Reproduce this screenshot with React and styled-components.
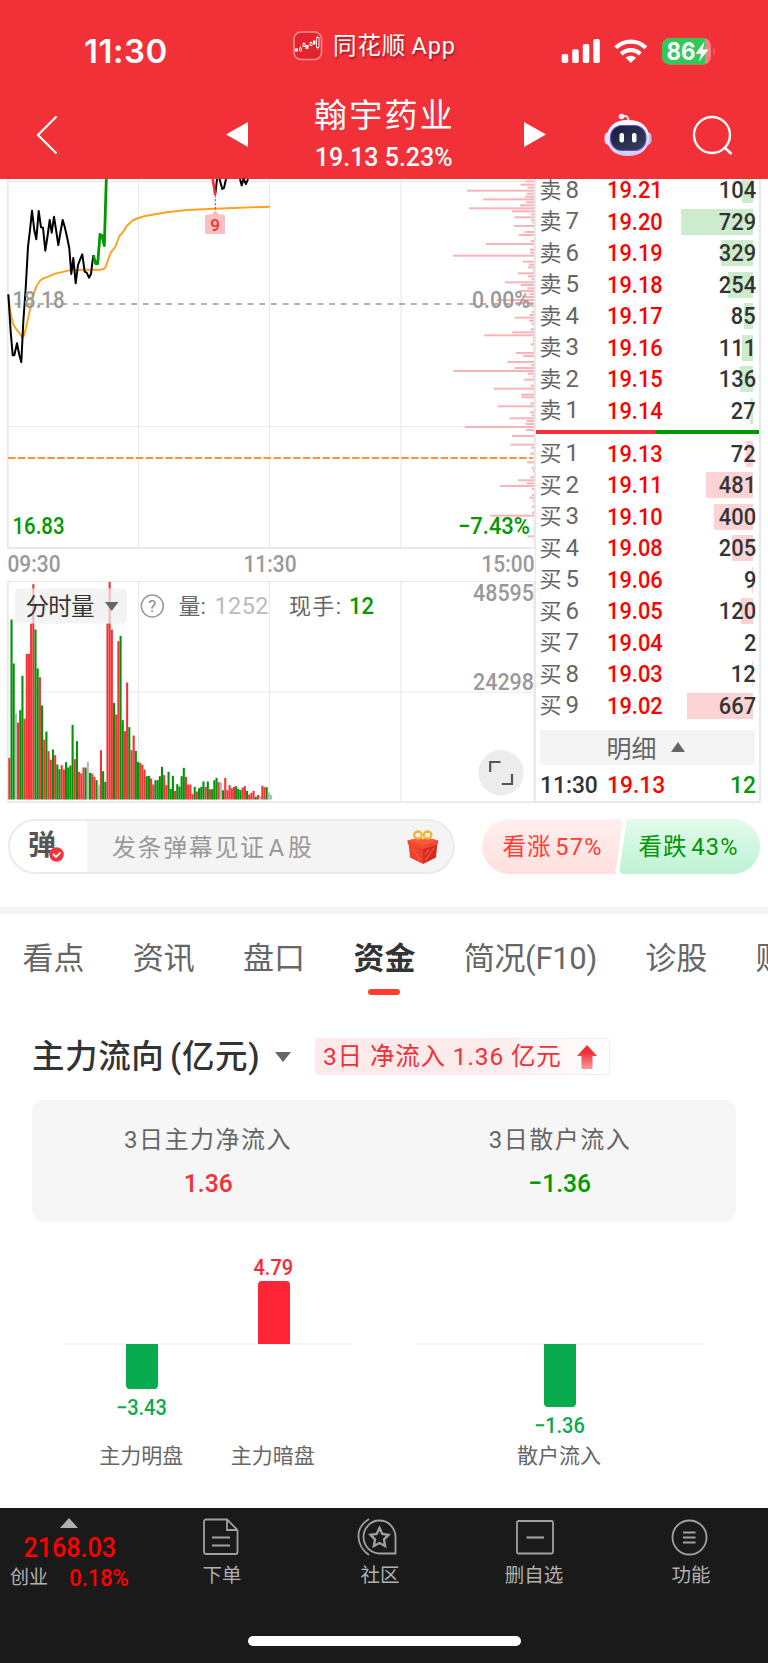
import React from 'react'
import styled, { createGlobalStyle, css } from 'styled-components'

const RED = '#f23038'
const UP = '#ff0000'
const DOWN = '#009900'
const GRID = '#e9e9e9'
const NUM = "Roboto, 'Noto Sans CJK SC', sans-serif"

const GlobalStyle = createGlobalStyle`
  * {
    box-sizing: border-box;
  }
  body {
    margin: 0;
    background: #fff;
    font-family: Roboto, 'Noto Sans CJK SC', sans-serif;
    color: #333;
  }
  svg {
    display: block;
  }
`

const sells = [
  [8, '19.21', 104, 11],
  [7, '19.20', 729, 72],
  [6, '19.19', 329, 32],
  [5, '19.18', 254, 25],
  [4, '19.17', 85, 9],
  [3, '19.16', 111, 11],
  [2, '19.15', 136, 13],
  [1, '19.14', 27, 3],
]

const buys = [
  [1, '19.13', 72, 7],
  [2, '19.11', 481, 47],
  [3, '19.10', 400, 39],
  [4, '19.08', 205, 21],
  [5, '19.06', 9, 1],
  [6, '19.05', 120, 12],
  [7, '19.04', 2, 0],
  [8, '19.03', 12, 1],
  [9, '19.02', 667, 66],
]

// [offset from the top, length], in thirds of a pixel
const profile = [
  [19, 25], [29, 41], [38, 20], [47, 201], [56, 22], [65, 27], [73, 153], [82, 24], [91, 42],
  [100, 195], [109, 66], [118, 9], [127, 59], [136, 9], [145, 4], [153, 60], [171, 28], [180, 46],
  [198, 10], [207, 144], [224, 13], [233, 11], [242, 243], [260, 33], [269, 15], [277, 18],
  [286, 3], [295, 49], [304, 18], [313, 8], [322, 88], [330, 40], [340, 20], [348, 44], [357, 12],
  [366, 30], [375, 112], [384, 57], [393, 27], [411, 6], [420, 14], [428, 57], [437, 15], [446, 7],
  [463, 10], [472, 65], [481, 149], [490, 4], [499, 3], [508, 10], [525, 2], [534, 54], [543, 33],
  [561, 80], [570, 8], [579, 57], [588, 242], [596, 19], [605, 4], [614, 31], [632, 10],
  [641, 121], [650, 2], [659, 39], [667, 37], [685, 11], [694, 108], [712, 12], [721, 6],
  [730, 74], [738, 22], [747, 25], [756, 207], [765, 24], [783, 66], [809, 71], [818, 8],
  [836, 11], [862, 21], [880, 7], [889, 3], [907, 11], [916, 48], [925, 22], [933, 102],
  [942, 6], [960, 7], [968, 14], [977, 4], [995, 7], [1013, 6], [1022, 131], [1084, 19],
]

// r = up minute, g = down minute, n = unchanged; number is height in thirds of a pixel
const volumes = `r125 g540 g408 n258 r231 g268 g371 r242 r437 r437 r528 r646 g510 g393 r367 g282 r180
g204 r145 r119 g150 r133 g105 g91 r103 r90 g112 g96 g102 g224 r121 g175 r83 r78 r96 g96 n113 g80
r78 r68 g58 n44 r148 g85 g53 r528 r653 r510 g290 r255 r475 g491 g238 r205 r351 g217 r148 r192
g146 g113 r110 r104 r90 g70 g71 r63 r45 g58 g58 g70 g98 r73 r43 g83 g32 g71 r26 g46 g39 g70 g95
r68 r45 r45 r16 g38 r24 g34 g38 g54 r38 g54 r31 g31 g58 g65 r52 n51 g28 r65 r28 r43 r34 r38 g40
g32 g28 r36 r40 g26 r15 r20 r26 g8 r14 n10 r41 r37 g37 n21 n14`
  .split(/\s+/)
  .map(v => ({ kind: v[0], h: Number(v.slice(1)) / 3 }))

const volumeColors = { r: '#f23438', g: '#009408', n: '#b8b8b8' }

const tabs = ['看点', '资讯', '盘口', '资金', '简况(F10)', '诊股', '财务']

const Page = styled.div`
  width: 768px;
  height: 1663px;
  overflow: hidden;
  display: flex;
  flex-direction: column;
  background: #fff;
`
// Digits are slightly condensed everywhere in the quote pages.
const Num = styled.span`
  display: inline-block;
  transform: scaleX(${p => p.$scale || 0.93});
  transform-origin: ${p => p.$origin || 'center'};
`

/* Header */

const Header = styled.header`
  height: 179px;
  flex: none;
  background: ${RED};
  color: #fff;
`
const StatusBar = styled.div`
  display: grid;
  grid-template-columns: 293px 268px 1fr;
  align-items: center;
  height: 90px;
`
const Clock = styled.div`
  padding: 12px 0 0 84px;
  font: 600 33px/40px Inter, sans-serif;
  letter-spacing: 0.5px;
`
const AppName = styled.div`
  display: flex;
  align-items: center;
  gap: 10px;
  padding-top: 1px;
  font-size: 23.5px;
  line-height: 30px;
  letter-spacing: 0.9px;
  word-spacing: -1.5px;
  text-shadow: 1px 2px 2px rgba(90, 0, 0, 0.5);
  white-space: nowrap;
`
const StatusIcons = styled.div`
  padding-top: 12px;
`
const NavBar = styled.div`
  display: grid;
  grid-template-columns: 36px 190px 297px 81px 88px 1fr;
  align-items: center;
  height: 89px;
`
const StockTitle = styled.div`
  display: flex;
  align-items: center;
  justify-content: space-between;
  grid-column: 3 / 5;
  width: 320px;
`
const StockNames = styled.div`
  margin: -2px 5px 0 0;
  text-align: center;
`
const StockName = styled.div`
  font-size: 33px;
  line-height: 42px;
  letter-spacing: 2.2px;
  padding-left: 2px;
`
const StockPrice = styled.div`
  font-size: 26px;
  font-weight: 500;
  line-height: 32px;
  margin-top: 4px;
`

/* Quote board */

const Board = styled.section`
  display: flex;
  flex: none;
  height: 624px;
  width: 761px;
`
const Charts = styled.div`
  width: 535px;
  svg {
    overflow: visible;
  }
`
const ChartText = styled.text`
  font-family: ${NUM};
  font-size: ${p => p.$size || 23.5}px;
  font-weight: ${p => p.$weight || 500};
`
const OrderBook = styled.div`
  width: 226px;
  border: solid ${GRID};
  border-width: 0 2px 2px 1px;
  overflow: hidden;
  display: flex;
  flex-direction: column;
`
const Orders = styled.div`
  flex: none;
  margin-top: ${p => p.$top}px;
`
const OrderRow = styled.div`
  display: grid;
  grid-template-columns: 67px 60px 1fr;
  align-items: center;
  height: 31.48px;
  padding: 0 3px 0 3.5px;
  font-size: 23.5px;
  font-weight: 500;
  line-height: 20px;
`
const OrderLabel = styled.span`
  display: flex;
  align-items: baseline;
  gap: 4px;
  font-size: 22px;
  font-weight: 400;
  color: #666;
`
const OrderIndex = styled.span`
  font-size: 24px;
`
const Price = styled.span`
  color: ${UP};
`
const Volume = styled.span`
  display: flex;
  justify-content: flex-end;
  align-items: center;
  height: 26px;
  color: ${p => p.$color || '#333'};
  ${p => p.$bar > 0 && css`
    background: linear-gradient(${p.$tone}, ${p.$tone}) right 3px top 0 / ${p.$bar}px 26px no-repeat;
  `}
`
const Ratio = styled.div`
  flex: none;
  height: 4px;
  margin-top: 4px;
  background: linear-gradient(to right, ${RED} 53.5%, ${DOWN} 53.5%);
`
const DetailToggle = styled.div`
  flex: none;
  display: flex;
  align-items: center;
  justify-content: center;
  gap: 14px;
  height: 35px;
  margin: 9px 4px 0 4px;
  padding: 0 4px 2px 0;
  background: #f4f4f4;
  color: #666;
  font-size: 25px;
`
const LastTrade = styled(OrderRow)`
  height: 43px;
  padding-top: 4px;
  font-size: 24.5px;
`

/* Comment bar */

const CommentBar = styled.section`
  flex: none;
  display: flex;
  justify-content: space-between;
  height: 104px;
  padding: 16px 8px 33px;
`
const CommentBox = styled.div`
  display: flex;
  width: 447px;
  height: 55px;
  border: 2px solid #ebebeb;
  border-radius: 28px;
  background: #f4f4f4;
  overflow: hidden;
`
const Danmu = styled.div`
  position: relative;
  width: 77px;
  padding-left: 18px;
  background: #fff;
  color: #555;
  font-size: 28px;
  line-height: 49px;
  font-weight: 700;
`
const CheckBadge = styled.svg`
  position: absolute;
  left: 39px;
  top: 26px;
`
const Placeholder = styled.div`
  flex: 1;
  padding-left: 25px;
  color: #999;
  font-size: 24px;
  line-height: 54px;
  letter-spacing: 1.6px;
`
const Letter = styled.span`
  margin: 0 2px 0 3px;
`
const GiftIcon = styled.svg`
  margin: 9px 14px 0 0;
`
const Votes = styled.div`
  display: flex;
  width: 278px;
  height: 55px;
`
const Vote = styled.div`
  width: 141px;
  height: 55px;
  font-size: 23.5px;
  line-height: 57px;
  letter-spacing: 1.2px;
  word-spacing: -3.5px;
  text-align: center;
  ${p => p.$up ? css`
    color: #ff3d33;
    background: linear-gradient(#ffefee, #ffe0de);
    border-radius: 28px 5px 5px 28px;
    clip-path: polygon(0 0, 100% 0, 133px 100%, 0 100%);
  ` : css`
    margin-left: -4px;
    padding-right: 2px;
    color: ${DOWN};
    background: linear-gradient(#e2fbec, #bff2d4);
    border-radius: 5px 28px 28px 5px;
    clip-path: polygon(8px 0, 100% 0, 100% 100%, 0 100%);
  `}
`

/* Tabs */

const Tabs = styled.nav`
  flex: none;
  display: flex;
  gap: 48.3px;
  height: 119px;
  padding: 25px 0 0 22.5px;
  border-top: 7px solid #f4f4f4;
  overflow: hidden;
`
const Tab = styled.div`
  flex: none;
  display: flex;
  flex-direction: column;
  align-items: center;
  font-size: 31px;
  line-height: 40px;
  color: ${p => p.$active ? '#333' : '#666'};
  font-weight: ${p => p.$active ? 700 : 400};
  letter-spacing: ${p => p.$tight ? '-0.3px' : 0};
  &::after {
    content: '';
    width: 32px;
    height: 6px;
    margin-top: 10px;
    border-radius: 3px;
    background: ${p => p.$active ? '#ff3d33' : 'transparent'};
  }
`

/* Money flow */

const Flow = styled.section`
  flex: none;
  height: 482px;
  padding: 12px 32px 0;
`
const FlowHead = styled.div`
  display: flex;
  align-items: center;
  height: 38px;
`
const FlowTitle = styled.h2`
  margin: 0 16px 0 0;
  font-size: 32.5px;
  line-height: 40px;
  font-weight: 500;
  letter-spacing: 0.6px;
  word-spacing: -3px;
  width: 227px;
  white-space: nowrap;
`
const FlowBadge = styled.div`
  display: flex;
  align-items: center;
  justify-content: space-between;
  width: 295px;
  height: 37px;
  margin: -1px 0 0 24px;
  padding: 0 12px 0 7px;
  border: 1px solid #fdeaea;
  border-radius: 4px;
  background: linear-gradient(to right, #fdeaea 55%, #fff);
  color: ${RED};
  font-size: 24.5px;
  letter-spacing: 0.85px;
  white-space: nowrap;
`
const BadgeText = styled.span`
  line-height: 32px;
  margin-top: 1px;
`
const Summary = styled.div`
  display: grid;
  grid-template-columns: 1fr 1fr;
  height: 122px;
  margin-top: 24px;
  padding-top: 22px;
  border-radius: 12px;
  background: #f6f6f6;
  text-align: center;
`
const SummaryLabel = styled.div`
  color: #666;
  font-size: 24px;
  line-height: 36px;
  letter-spacing: 1.5px;
`
const SummaryValue = styled.div`
  color: ${p => p.$down ? DOWN : RED};
  font-size: 26.5px;
  font-weight: 500;
  line-height: 36px;
  margin-top: 7px;
`
const BarGroups = styled.div`
  display: grid;
  grid-template-columns: 290px 290px;
  gap: 62px;
  margin-top: 28px;
  padding-left: 31px;
`
const BarGroup = styled.div`
  display: flex;
  justify-content: center;
  background: linear-gradient(#f4f4f4, #f4f4f4) 0 93px / 100% 2px no-repeat;
`
const BarColumn = styled.div`
  width: 131.5px;
  display: grid;
  grid-template-rows: 94px 95px 34px;
  justify-items: center;
  color: #666;
  font-size: 21px;
  line-height: 34px;
`
const BarCell = styled.div`
  grid-row: ${p => p.$up ? 1 : 2};
  display: flex;
  flex-direction: ${p => p.$up ? 'column-reverse' : 'column'};
  align-items: center;
  gap: ${p => p.$up ? 1 : 7}px;
`
const Bar = styled.div`
  width: 32px;
  background: ${p => p.$up ? '#ff2436' : '#08ab4d'};
  border-radius: ${p => p.$up ? '4px 4px 0 0' : '0 0 4px 4px'};
`
const BarValue = styled.div`
  color: ${p => p.$up ? '#ff2436' : '#08ab4d'};
  font-size: 21.5px;
  font-weight: 500;
  line-height: 24px;
  padding-right: 1px;
`
const BarCaption = styled.div`
  grid-row: 3;
  padding-right: 2px;
`

/* Bottom bar */

const BottomBar = styled.footer`
  height: 155px;
  background: #1a1a1a;
  color: #b0b0b0;
`
const BottomItems = styled.div`
  display: grid;
  grid-template-columns: 144px repeat(4, 156px);
  height: 128px;
`
const IndexQuote = styled.div`
  display: flex;
  flex-direction: column;
  align-items: center;
  padding: 10px 6px 0 0;
`
const IndexValue = styled.div`
  color: ${UP};
  font-size: 27px;
  font-weight: 500;
  line-height: 30px;
  margin-top: 5px;
  padding-left: 1px;
`
const IndexChange = styled.div`
  display: flex;
  align-items: center;
  gap: 19px;
  padding-left: 3px;
  font-size: 19px;
  line-height: 30px;
  white-space: nowrap;
`
const IndexPercent = styled(Num)`
  color: ${UP};
  font-size: 23.5px;
  font-weight: 500;
`
const BottomItem = styled.div`
  display: flex;
  flex-direction: column;
  align-items: center;
  padding-top: 8px;
  font-size: 19.5px;
  line-height: 28px;
  svg {
    margin-bottom: 4px;
    fill: none;
    stroke: #a0a0a0;
    stroke-width: 1.8;
  }
`
const BottomLabel = styled.span`
  padding-left: ${p => p.$indent || 0}px;
`
const HomeIndicator = styled.div`
  width: 273px;
  height: 10px;
  margin: 0 auto;
  border-radius: 5px;
  background: #fff;
`

const AppIcon = () => (
  <svg width="30" height="30" viewBox="0 0 30 30">
    <rect x="1" y="1" width="27.5" height="27.5" rx="7" fill="#e3242c" stroke="#f58f93" strokeWidth="1.6" />
    <g fill="#fff">
      <rect x="2" y="17.5" width="3" height="3" />
      <rect x="12.5" y="14" width="3" height="4" />
      <rect x="20" y="9.5" width="2.5" height="4" />
    </g>
    <path
      fill="none"
      stroke="#fff"
      strokeWidth="0.9"
      d="M7.500 15.500v1.500M6.500 17h2v3h-2zM11 11.500v1M10 12.500h2v3h-2zM18 10.500v1M17 11.500h2v3h-2zM24.500 5v1.500M23.500 6.500h2.500v10h-2.500zM24.700 16.500v2"
    />
  </svg>
)

const PhoneStatus = () => (
  <svg width="160" height="28" viewBox="561 37 160 28">
    <g fill="#fff">
      <rect x="561.7" y="54" width="6.5" height="9" rx="1.8" />
      <rect x="572.2" y="49.3" width="6.5" height="13.7" rx="1.8" />
      <rect x="582.8" y="44" width="6.5" height="19" rx="1.8" />
      <rect x="593.3" y="39" width="6.5" height="24" rx="1.8" />
      <path d="M630.800 63l-5.200-5.300a7.600 7.600 0 0 1 10.400 0z" />
    </g>
    <g fill="none" stroke="#fff" strokeWidth="4.3">
      <path d="M615.800 47.800a21.500 21.500 0 0 1 30 0" />
      <path d="M621.300 54a13.500 13.500 0 0 1 19 0" />
    </g>
    <rect x="662" y="38" width="49" height="26.5" rx="8" fill="#f77d82" />
    <path d="M670 38h35v26.500h-35a8 8 0 0 1-8-8V46a8 8 0 0 1 8-8z" fill="#34c759" />
    <path d="M713.500 47.500q2.500 3.500 0 7.500z" fill="#f77d82" />
    <text x="666.5" y="60" fill="#fff" fontFamily="Inter, sans-serif" fontWeight="700" fontSize="24.5" textLength="29" lengthAdjust="spacingAndGlyphs">86</text>
    <path d="M704.500 41.500l-9 12.300h5.600l-2.400 8 10-12.300h-5.900z" fill="#fff" />
  </svg>
)

const Robot = () => (
  <svg width="48" height="44" viewBox="0 0 48 44">
    <defs>
      <linearGradient id="shell" x1="0" y1="0" x2="0" y2="1">
        <stop offset="0" stopColor="#fff" />
        <stop offset="1" stopColor="#cfcdf2" />
      </linearGradient>
      <linearGradient id="face" x1="0" y1="0" x2="1" y2="1">
        <stop offset="0" stopColor="#161d3b" />
        <stop offset="1" stopColor="#3a4160" />
      </linearGradient>
    </defs>
    <path d="M18 3.500q7-2 6.500 5" fill="none" stroke="#e6e5fa" strokeWidth="2" />
    <circle cx="17.5" cy="3.5" r="2.8" fill="#eceafc" />
    <rect x="0.5" y="19" width="9" height="13" rx="4.5" fill="#d9d8f5" />
    <rect x="38.5" y="19" width="9" height="13" rx="4.5" fill="#c3c2ee" />
    <path d="M24 7C10 7 3 14 3 25s8 18 21 18 21-7 21-18S38 7 24 7z" fill="url(#shell)" />
    <rect x="6.5" y="12.5" width="35.5" height="25" rx="11.5" fill="url(#face)" stroke="#6b50c9" strokeWidth="1.2" />
    <rect x="15.5" y="20" width="4.5" height="9.5" rx="2" fill="#fff" />
    <rect x="28" y="20" width="4.5" height="9.5" rx="2" fill="#fff" />
  </svg>
)

const FitText = props => <ChartText lengthAdjust="spacingAndGlyphs" {...props} />

const PriceChart = () => (
  <svg width="535" height="402" viewBox="0 179 535 402">
    <g fill="none" stroke={GRID} strokeWidth="1.2">
      <path d="M8 181.500H535M8 426.500H535M138.500 179V548M269.500 179V548M401 179V548" />
      <path d="M7.800 179V548H534.300V179" strokeWidth="1.8" />
    </g>
    <g fill="#f8b4b6">
      {profile.map(([y, w]) => (
        <rect key={y} x={534 - w / 3} y={174 + y / 3} width={w / 3} height="2" />
      ))}
    </g>
    <path d="M8 304H534" stroke="#999" strokeWidth="1.5" strokeDasharray="5.9 5.75" strokeDashoffset="5" />
    <path d="M8 458H533" stroke="#ff9233" strokeWidth="2.2" strokeDasharray="7.5 2.33" />
    <g fill="none" strokeLinejoin="round">
      <path
        stroke="#ffa01e"
        strokeWidth="1.9"
        d="M8.500 295L10.300 311 12.700 323.300 16.700 330 19 332.300 22 337.300 24 335.700 27.700 320 30.700 306.700 33.300 295 36.700 285.700 40 280.700 43.300 278.300 48.300 276.700 55 273.700 69.300 270.300 83.300 269.700 100 269.700 104.300 268.700 106 266 108 260 110.700 252.700 115 247.300 117.300 241.700 119.300 236 123.300 231.700 126.700 226 133.300 220 138.300 218 145 216 166.700 212.300 186.700 210 215 208.700 240 207.700 270 206.700"
      />
      <path
        stroke="#000"
        strokeWidth="2"
        d="M8.300 294.300L10.700 331.700 12.700 355.300H14.300L17 343.300 19.300 355 21.300 362.300 23.300 321.700 25.700 288.300 28 246.700 30 230 32 210.700 34.300 230 36.300 239.300 38.700 211 41 227.300 43 227.700 45.300 250.700 47.700 235 49.700 220 51.700 232.700 54 216.700 56.300 231.700 58.300 245 60.700 231 62.700 220 64.700 226.700 67 236.700 69.300 248.300 71.300 274 73.300 258 75.700 283.300 78 265 80.300 259 82.300 254.300 84.700 271.700 86.700 272.700 89 277.700 91 274 93.300 255"
      />
      <path stroke="#000" strokeWidth="2" d="M215.500 193L217 179M219.500 179L222.300 189 224 188 226 179M240 179L241.700 185.500 243.500 179 246 184 248 179" />
      <path stroke={DOWN} strokeWidth="2.8" d="M93.300 255L95.700 263.700H97.700L100 234.300 102 235.700 104.300 245.700 106.300 179" />
      <path stroke={RED} strokeWidth="2.6" d="M212.700 179L215.300 195" />
      <path stroke={RED} strokeWidth="1" strokeDasharray="2.5 1.5" d="M215.300 195V212" />
    </g>
    <path d="M215.300 210.500L219 214.500H223.500Q225 214.500 225 216V232.500Q225 234 223.500 234H206.500Q205 234 205 232.500V216Q205 214.500 206.500 214.500H211.500Z" fill="#f9bfc1" />
    <ChartText $size={17} x="215.2" y="230.5" textAnchor="middle" fill={RED}>9</ChartText>
    <FitText x="12.5" y="308.3" fill="#999" textLength="52">18.18</FitText>
    <FitText x="472" y="308.3" fill="#999" textLength="58">0.00%</FitText>
    <FitText x="12.5" y="534.3" fill={DOWN} textLength="52">16.83</FitText>
    <FitText x="458" y="534.3" fill={DOWN} textLength="72">−7.43%</FitText>
    <FitText x="7.5" y="571.5" fill="#999" textLength="53">09:30</FitText>
    <FitText x="243.5" y="571.5" fill="#999" textLength="53">11:30</FitText>
    <FitText x="481.5" y="571.5" fill="#999" textLength="53">15:00</FitText>
  </svg>
)

const VolumeChart = () => (
  <svg width="535" height="222" viewBox="0 581 535 222">
    <g fill="none" stroke={GRID} strokeWidth="1.2">
      <path d="M8 581.600H535M8 692H535M138.500 581V802M269.500 581V802M401 581V802" />
      <path d="M7.800 581V802.200H534.300V581" strokeWidth="1.8" />
    </g>
    {volumes.map((v, i) => (
      <rect
        key={i}
        x={8.3 + (i * 261.7) / (volumes.length - 1)}
        y={799.5 - v.h}
        width="2.1"
        height={v.h}
        fill={volumeColors[v.kind]}
      />
    ))}
    <rect x="15" y="588.5" width="111.5" height="35" rx="4" fill="#eee" fillOpacity="0.72" />
    <ChartText x="25.5" y="614.5" $weight={400} fill="#333" textLength="69">分时量</ChartText>
    <path d="M105 602H118.500L111.700 611z" fill="#666" />
    <circle cx="152.3" cy="606" r="11" fill="none" stroke="#999" strokeWidth="1.5" />
    <ChartText $size={17} $weight={400} x="152.3" y="612" textAnchor="middle" fill="#888">?</ChartText>
    <ChartText $weight={400} $size={22} x="178.5" y="614" fill="#666">量:</ChartText>
    <ChartText $weight={400} x="214.5" y="614" fill="#bbb" textLength="54">1252</ChartText>
    <ChartText $weight={400} $size={22} x="289" y="614" fill="#666" textLength="52">现手:</ChartText>
    <FitText x="349" y="614" fill={DOWN} textLength="25">12</FitText>
    <FitText x="473" y="600.5" fill="#999" textLength="61">48595</FitText>
    <FitText x="473" y="690" fill="#999" textLength="61">24298</FitText>
    <circle cx="501" cy="772.7" r="22.7" fill="#ececec" />
    <path d="M490.200 772V762H500.500M512 774V784H501.800" fill="none" stroke="#555" strokeWidth="2.2" />
  </svg>
)

const Gift = () => (
  <GiftIcon width="32" height="35" viewBox="0 0 32 35">
    <path d="M1.500 12L16 16v18L3 27.500z" fill="#f23f2c" />
    <path d="M30.500 12L16 16v18l13-6.500z" fill="#d92a20" />
    <path d="M0.300 10.500L16 7l15.400 3.500-.6 4L16 19 1 14.500z" fill="#f24a35" />
    <path d="M0.300 10.500L16 7l15.400 3.500L16 15z" fill="#f9593d" />
    <path d="M6 19l7 11M27 18L18.500 30M22 19l-4 6" stroke="#f9704c" strokeWidth="1" />
    <g fill="none" stroke="#f9b12e" strokeWidth="2.3">
      <ellipse cx="11" cy="5" rx="3.8" ry="3.5" />
      <ellipse cx="20.5" cy="5" rx="3.8" ry="3.5" />
    </g>
    <circle cx="15.8" cy="7.5" r="2" fill="#ffd45e" />
  </GiftIcon>
)

const Order = ({ side, row, tone }) => (
  <OrderRow>
    <OrderLabel>{side}<OrderIndex>{row[0]}</OrderIndex></OrderLabel>
    <Price><Num $origin="left">{row[1]}</Num></Price>
    <Volume $bar={row[3]} $tone={tone}><Num $origin="right">{row[2]}</Num></Volume>
  </OrderRow>
)

const FlowBar = ({ label, value, height, up }) => (
  <BarColumn>
    <BarCell $up={up}>
      <Bar $up={up} style={{ height }} />
      <BarValue $up={up}><Num>{value}</Num></BarValue>
    </BarCell>
    <BarCaption>{label}</BarCaption>
  </BarColumn>
)

const App = () => (
  <Page>
    <GlobalStyle />
    <Header>
      <StatusBar>
        <Clock>11:30</Clock>
        <AppName><AppIcon />同花顺 App</AppName>
        <StatusIcons><PhoneStatus /></StatusIcons>
      </StatusBar>
      <NavBar>
        <span />
        <svg width="24" height="42" viewBox="0 0 24 42">
          <path d="M20.500 2.500L2 21l18.500 18.500" fill="none" stroke="#fff" strokeWidth="2.2" />
        </svg>
        <StockTitle>
          <svg width="22" height="25" viewBox="0 0 22 25"><path d="M22 0v25L0 12.500z" fill="#fff" /></svg>
          <StockNames>
            <StockName>翰宇药业</StockName>
            <StockPrice><Num $scale={0.96}>19.13 5.23%</Num></StockPrice>
          </StockNames>
          <svg width="22" height="25" viewBox="0 0 22 25"><path d="M0 0v25l22-12.500z" fill="#fff" /></svg>
        </StockTitle>
        <Robot />
        <svg width="42" height="42" viewBox="0 0 42 42">
          <circle cx="20" cy="21" r="18" fill="none" stroke="#fff" strokeWidth="2.4" />
          <path d="M32 33l7.500 7" stroke="#fff" strokeWidth="2.6" />
        </svg>
      </NavBar>
    </Header>

    <Board>
      <Charts>
        <PriceChart />
        <VolumeChart />
      </Charts>
      <OrderBook>
        <Orders $top={-4.5}>
          {sells.map(row => <Order key={row[0]} side="卖" row={row} tone="#cdebcd" />)}
        </Orders>
        <Ratio />
        <Orders $top={4}>
          {buys.map(row => <Order key={row[0]} side="买" row={row} tone="#fcd3d5" />)}
        </Orders>
        <DetailToggle>
          明细
          <svg width="14" height="10" viewBox="0 0 14 10"><path d="M0 10L7 0l7 10z" fill="#666" /></svg>
        </DetailToggle>
        <LastTrade>
          <Num $origin="left">11:30</Num>
          <Price><Num $origin="left">19.13</Num></Price>
          <Volume $color={DOWN}><Num $origin="right">12</Num></Volume>
        </LastTrade>
      </OrderBook>
    </Board>

    <CommentBar>
      <CommentBox>
        <Danmu>
          弹
          <CheckBadge width="15" height="15" viewBox="0 0 15 15">
            <circle cx="7.5" cy="7.5" r="7.3" fill="#f5333a" />
            <path d="M4 7l3 3 4.500-4.500" fill="none" stroke="#fff" strokeWidth="1.8" />
          </CheckBadge>
        </Danmu>
        <Placeholder>发条弹幕见证<Letter>A</Letter>股</Placeholder>
        <Gift />
      </CommentBox>
      <Votes>
        <Vote $up>看涨 57%</Vote>
        <Vote>看跌 43%</Vote>
      </Votes>
    </CommentBar>

    <Tabs>
      {tabs.map(tab => (
        <Tab key={tab} $active={tab === '资金'} $tight={tab.length > 2}>{tab}</Tab>
      ))}
    </Tabs>

    <Flow>
      <FlowHead>
        <FlowTitle>主力流向 (亿元)</FlowTitle>
        <svg width="16" height="10" viewBox="0 0 16 10"><path d="M0 0h16L8 10z" fill="#666" /></svg>
        <FlowBadge>
          <BadgeText>3日 净流入 1.36 亿元</BadgeText>
          <svg width="20" height="24" viewBox="0 0 20 24">
            <defs>
              <linearGradient id="arrow" x1="0" y1="0" x2="0" y2="1">
                <stop offset="0.3" stopColor="#ee3035" />
                <stop offset="1" stopColor="#f79a9c" />
              </linearGradient>
            </defs>
            <path d="M10 0l10 11h-4.500v13h-11V11H0z" fill="url(#arrow)" />
          </svg>
        </FlowBadge>
      </FlowHead>
      <Summary>
        <div>
          <SummaryLabel>3日主力净流入</SummaryLabel>
          <SummaryValue><Num>1.36</Num></SummaryValue>
        </div>
        <div>
          <SummaryLabel>3日散户流入</SummaryLabel>
          <SummaryValue $down><Num>−1.36</Num></SummaryValue>
        </div>
      </Summary>
      <BarGroups>
        <BarGroup>
          <FlowBar label="主力明盘" value="−3.43" height={45} />
          <FlowBar label="主力暗盘" value="4.79" height={63} up />
        </BarGroup>
        <BarGroup>
          <FlowBar label="散户流入" value="−1.36" height={63} />
        </BarGroup>
      </BarGroups>
    </Flow>

    <BottomBar>
      <BottomItems>
        <IndexQuote>
          <svg width="18" height="10" viewBox="0 0 18 10"><path d="M0 10L9 0l9 10z" fill="#b0b0b0" /></svg>
          <IndexValue><Num>2168.03</Num></IndexValue>
          <IndexChange>创业<IndexPercent>0.18%</IndexPercent></IndexChange>
        </IndexQuote>
        <BottomItem>
          <svg width="42" height="42" viewBox="0 0 42 42">
            <path d="M5 3.500h21l10.500 10.500V36a2 2 0 0 1-2 2H5a2 2 0 0 1-2-2V5.500a2 2 0 0 1 2-2zM26 4v10h10M11 21.500h18M11 29.500h18" />
          </svg>
          <BottomLabel>下单</BottomLabel>
        </BottomItem>
        <BottomItem>
          <svg width="42" height="42" viewBox="0 0 42 42">
            <path d="M38.500 37.500H23A16 16.500 0 1 1 38.500 21zM12 3Q1 10 1.500 21t10.500 18" />
            <path d="M22.500 12l2.800 6 6.200.9-4.500 4.600 1.100 6.500-5.600-3-5.600 3 1.100-6.500-4.500-4.600 6.200-.9z" strokeWidth="2.4" />
          </svg>
          <BottomLabel $indent={4}>社区</BottomLabel>
        </BottomItem>
        <BottomItem>
          <svg width="42" height="42" viewBox="0 0 42 42">
            <rect x="4" y="5" width="36" height="32.5" rx="1.5" />
            <path d="M13.500 21.500h17.500" strokeWidth="2.2" />
          </svg>
          <BottomLabel>删自选</BottomLabel>
        </BottomItem>
        <BottomItem>
          <svg width="42" height="42" viewBox="0 0 42 42">
            <circle cx="20.5" cy="21.5" r="17" />
            <path d="M14 16.500h12.500M14 21.500h12.500M14 26.500h12.500" strokeWidth="2" />
          </svg>
          <BottomLabel $indent={2}>功能</BottomLabel>
        </BottomItem>
      </BottomItems>
      <HomeIndicator />
    </BottomBar>
  </Page>
)

export default App
